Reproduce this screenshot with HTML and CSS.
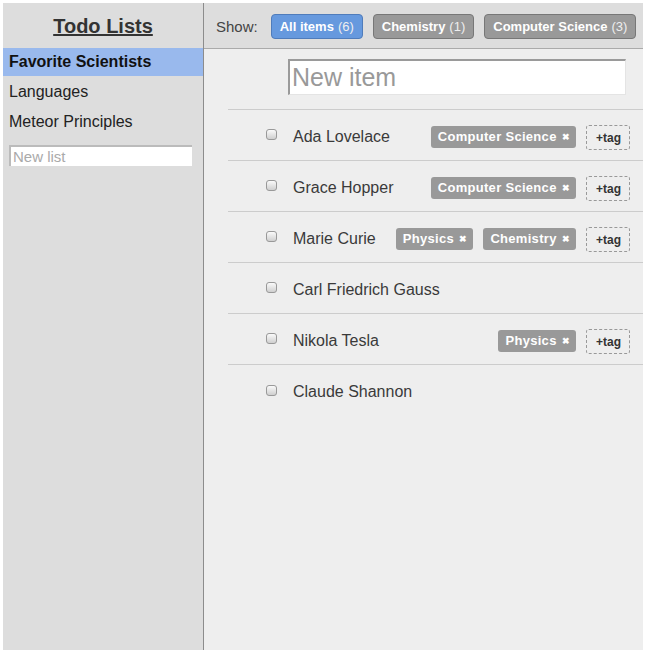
FILE: index.html
```
<!DOCTYPE html>
<html>
<head>
<meta charset="utf-8">
<link rel="stylesheet" href="styles.css">
</head>
<body>
<div class="app">
  <aside class="sidebar">
    <h3 class="title">Todo Lists</h3>
    <ul class="lists">
      <li class="list selected">Favorite Scientists</li>
      <li class="list">Languages</li>
      <li class="list">Meteor Principles</li>
    </ul>
    <input class="new-list" type="text" placeholder="New list">
  </aside>
  <main class="main">
    <div class="filter">
      <span class="show">Show:</span>
      <span class="btn active">All items <span class="count">(6)</span></span>
      <span class="btn">Chemistry <span class="count">(1)</span></span>
      <span class="btn">Computer Science <span class="count">(3)</span></span>
    </div>
    <div class="new-item-wrap">
      <input class="new-item" type="text" placeholder="New item">
    </div>
    <ul class="items">
      <li class="item">
        <span class="check"></span>
        <span class="name">Ada Lovelace</span>
        <span class="tags">
          <span class="tag">Computer Science <span class="x">&#x2716;</span></span>
          <span class="add-tag">+tag</span>
        </span>
      </li>
      <li class="item">
        <span class="check"></span>
        <span class="name">Grace Hopper</span>
        <span class="tags">
          <span class="tag">Computer Science <span class="x">&#x2716;</span></span>
          <span class="add-tag">+tag</span>
        </span>
      </li>
      <li class="item">
        <span class="check"></span>
        <span class="name">Marie Curie</span>
        <span class="tags">
          <span class="tag">Physics <span class="x">&#x2716;</span></span>
          <span class="tag">Chemistry <span class="x">&#x2716;</span></span>
          <span class="add-tag">+tag</span>
        </span>
      </li>
      <li class="item">
        <span class="check"></span>
        <span class="name">Carl Friedrich Gauss</span>
      </li>
      <li class="item">
        <span class="check"></span>
        <span class="name">Nikola Tesla</span>
        <span class="tags">
          <span class="tag">Physics <span class="x">&#x2716;</span></span>
          <span class="add-tag">+tag</span>
        </span>
      </li>
      <li class="item">
        <span class="check"></span>
        <span class="name">Claude Shannon</span>
      </li>
    </ul>
  </main>
</div>
</body>
</html>
```
FILE: styles.css
```
* { box-sizing: border-box; }
html, body { background: #fff; }
body {
  margin: 3px 4px 0 3px;
  font-family: "Liberation Sans", Arial, sans-serif;
  color: #333;
}
.app {
  display: flex;
  height: calc(100vh - 3px);
}
.sidebar {
  width: 201px;
  flex: none;
  background: #ddd;
  border-right: 1px solid #8c8c8c;
}
.title {
  margin: 0;
  height: 45px;
  line-height: 46px;
  text-align: center;
  font-size: 20px;
  font-weight: bold;
  text-decoration: underline;
  color: #333;
}
.lists {
  list-style: none;
  margin: 0;
  padding: 0;
}
.list {
  height: 28px;
  line-height: 28px;
  margin-bottom: 2px;
  padding-left: 6px;
  font-size: 16px;
  color: #222;
}
.list.selected {
  background: #99b9ed;
  font-weight: bold;
  color: #111;
}
.new-list {
  display: block;
  margin: 9px 0 0 6px;
  width: 183px;
  height: 21px;
  padding: 0 2px;
  border: none;
  border-top: 2px solid #bbb;
  border-left: 2px solid #bbb;
  background: #fff;
  font-family: "Liberation Sans", Arial, sans-serif;
  font-size: 15px;
  outline: none;
}
.new-list::placeholder { color: #aaa; }
.main {
  flex: 1;
  background: #eee;
}
.filter {
  height: 46px;
  background: #ddd;
  border-bottom: 1px solid #aaa;
  display: flex;
  align-items: center;
  padding: 1px 0 0 12px;
  gap: 10px;
}
.show {
  font-size: 15px;
  color: #444;
  margin-right: 3px;
}
.btn {
  display: inline-flex;
  align-items: center;
  height: 25px;
  padding: 0 8px;
  border: 1px solid #777;
  border-radius: 4px;
  background: #999;
  color: #fff;
  font-size: 13px;
  font-weight: bold;
}
.btn .count {
  font-weight: normal;
  margin-left: 4px;
  color: #eee;
}
.btn.active {
  background: #6699de;
  border-color: #4f7cbb;
}
.new-item-wrap {
  padding: 10px 17px 14px 84px;
}
.new-item {
  display: block;
  width: 100%;
  height: 36px;
  padding: 0 2px;
  border: none;
  border-top: 2px solid #9a9a9a;
  border-left: 2px solid #9a9a9a;
  border-right: 1px solid #e4e4e4;
  border-bottom: 1px solid #e4e4e4;
  background: #fff;
  font-family: "Liberation Sans", Arial, sans-serif;
  font-size: 25px;
  outline: none;
}
.new-item::placeholder { color: #999; }
.items {
  list-style: none;
  margin: 0 0 0 24px;
  padding: 0;
  border-top: 1px solid #ccc;
}
.item {
  display: flex;
  align-items: center;
  height: 51px;
  padding: 3px 13px 0 38px;
  border-bottom: 1px solid #ccc;
}
.item:last-child { border-bottom: none; }
.check {
  flex: none;
  width: 11px;
  height: 11px;
  border: 1px solid #999;
  border-radius: 3px;
  background: linear-gradient(#fafafa, #cfcfcf);
  margin-top: -4px;
}
.name {
  margin-left: 16px;
  font-size: 16px;
  color: #3a3a3a;
}
.tags {
  margin-left: auto;
  display: flex;
  align-items: center;
  gap: 10px;
}
.tag {
  display: inline-flex;
  align-items: center;
  height: 22px;
  padding: 0 6px 0 7px;
  border-radius: 3px;
  background: #999;
  color: #fff;
  font-size: 13px;
  font-weight: bold;
  letter-spacing: 0.3px;
}
.tag .x {
  font-size: 9px;
  margin-left: 5px;
}
.add-tag {
  display: inline-flex;
  align-items: center;
  height: 25px;
  padding: 0 8px 0 9px;
  border: 1px dashed #999;
  border-radius: 3px;
  font-size: 12px;
  font-weight: bold;
  color: #333;
  margin-top: 2px;
}
```
